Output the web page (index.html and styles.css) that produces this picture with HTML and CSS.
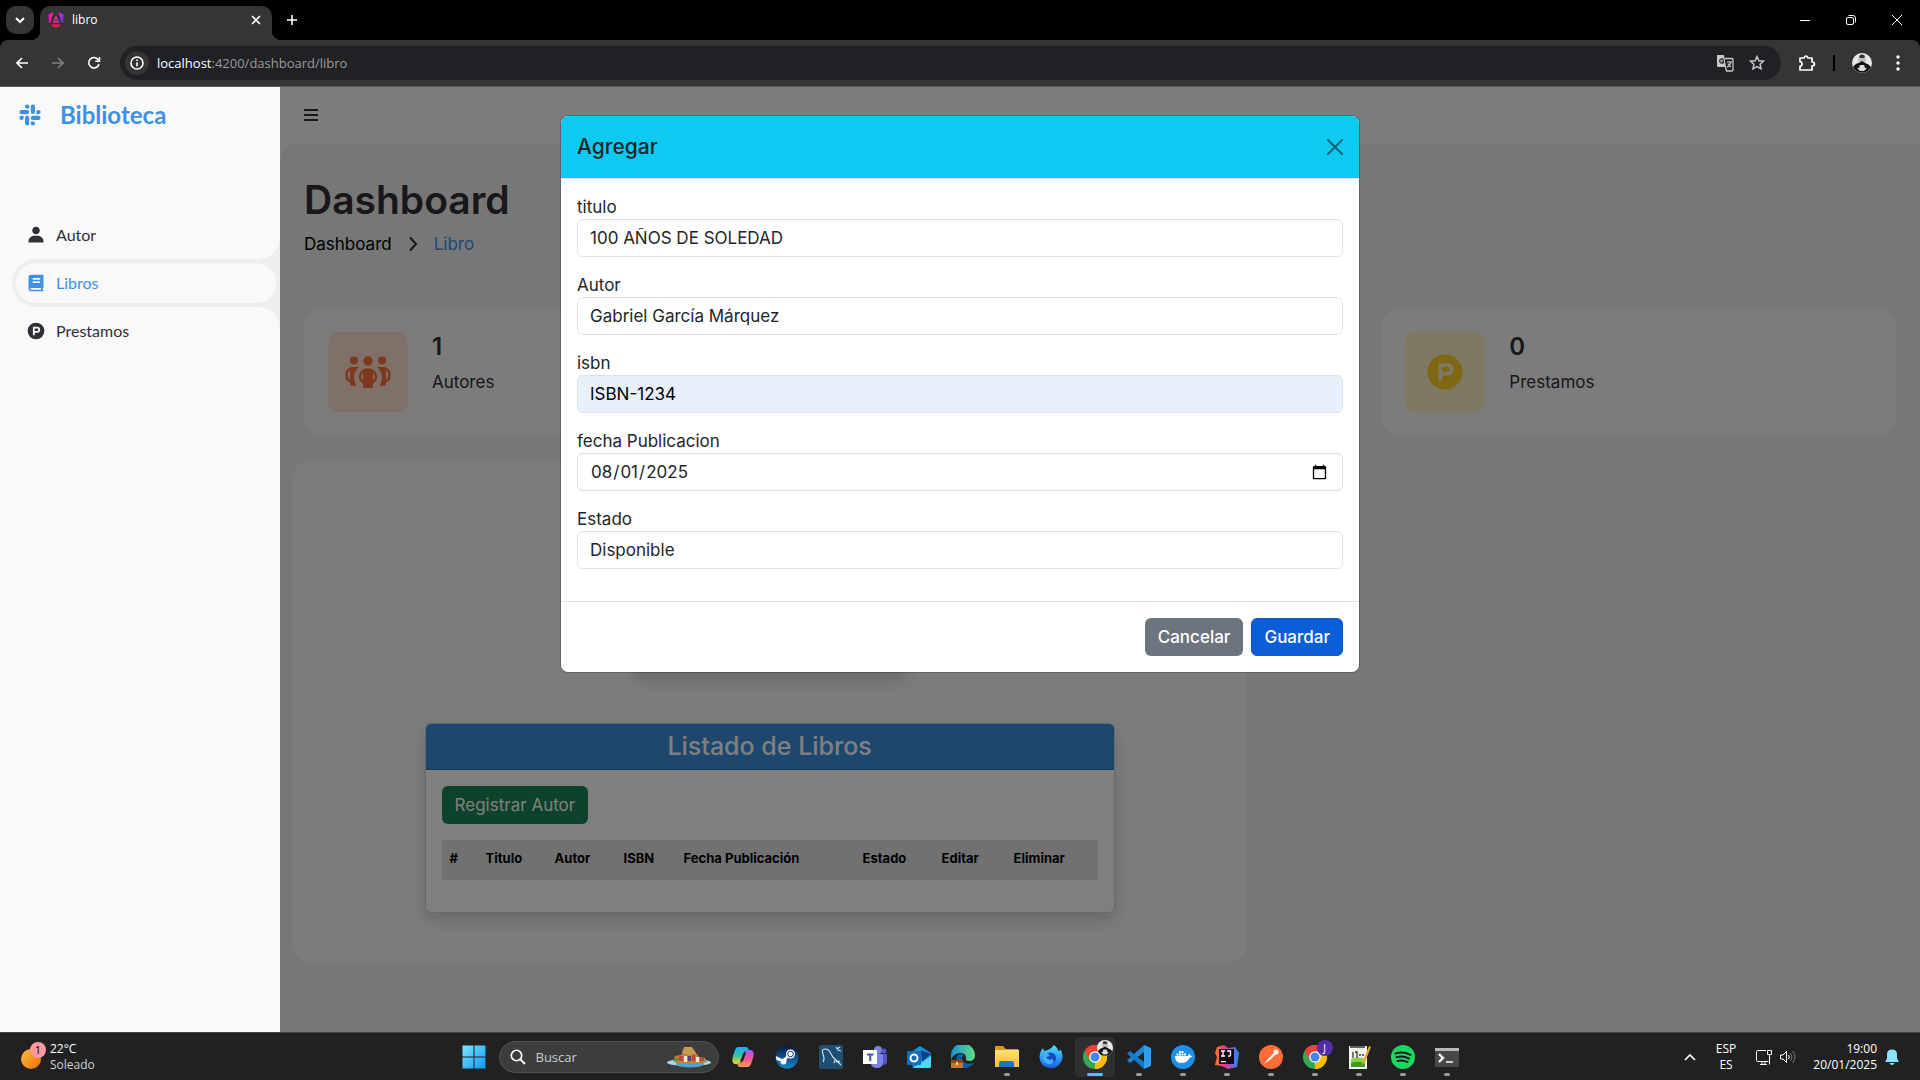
FILE: index.html
```
<!DOCTYPE html>
<html lang="en-US">
<head>
<meta charset="utf-8">
<title>libro</title>
<link rel="stylesheet" href="styles.css">
</head>
<body>
<svg class="defs" aria-hidden="true">
  <defs>
    <symbol id="parking" viewBox="0 0 24 24"><path fill-rule="evenodd" d="M12 2a10 10 0 1 0 0 20 10 10 0 0 0 0-20zM8.300 7h5.200a3.400 3.400 0 0 1 0 7h-3v3H8.300zm2.200 2.100v2.800h2.900a1.400 1.400 0 0 0 0-2.800z"/></symbol>
    <symbol id="chrome" viewBox="0 0 24 24">
      <path d="M12 12 1.600 6A12 12 0 0 1 22.400 6z" fill="#ea4335"/>
      <path d="M12 12 22.400 6A12 12 0 0 1 12 24z" fill="#fbbc04"/>
      <path d="M12 12V24A12 12 0 0 1 1.600 6z" fill="#34a853"/>
      <path d="M12 6.500h10.700A12 12 0 0 0 1.600 6L7 15z" fill="#ea4335"/>
      <path d="M16.800 14.700 11.500 24A12 12 0 0 0 22.700 6.500H12z" fill="#fbbc04"/>
      <circle cx="12" cy="12" r="5.800" fill="#fff"/><circle cx="12" cy="12" r="4.500" fill="#4285f4"/>
    </symbol>
    <symbol id="portrait" viewBox="0 0 20 20">
      <circle cx="10" cy="10" r="10" fill="#e8e8e8"/>
      <path d="M7 3q3-4 6 0l1 5-2 3H8L6 8z" fill="#bbb"/><path d="M7 3q3-3 6 0l-1 2H8z" fill="#333"/>
      <path d="M1 14q3-4 6-4l3-2 3 2q4 1 6 4a10 10 0 0 1-18 0z" fill="#111"/><path d="M8 12h4l1 3H7zM5 15h10l-3 3H8z" fill="#ddd"/>
    </symbol>
    <linearGradient id="gAng" x2="1"><stop stop-color="#f0b"/><stop offset=".5" stop-color="#f03c8c"/><stop offset="1" stop-color="#7a2cff"/></linearGradient>
    <linearGradient id="gWin" x2="1" y2="1"><stop stop-color="#7ee6ff"/><stop offset="1" stop-color="#0a96f8"/></linearGradient>
    <linearGradient id="gCopA" y2="1" x2="0"><stop stop-color="#1fa8ff"/><stop offset=".5" stop-color="#2fc3a0"/><stop offset="1" stop-color="#ffd21f"/></linearGradient>
    <linearGradient id="gCopB" y2="1" x2="0"><stop stop-color="#a45cff"/><stop offset=".5" stop-color="#f0529c"/><stop offset="1" stop-color="#ff9a4a"/></linearGradient>
    <linearGradient id="gSteam" y2="1" x2="0"><stop stop-color="#0b1740"/><stop offset="1" stop-color="#1488c8"/></linearGradient>
    <linearGradient id="gSun" x2="1" y2="1"><stop stop-color="#f8c23a"/><stop offset="1" stop-color="#f0680c"/></linearGradient>
    <linearGradient id="gFox" y2="1" x2="0"><stop stop-color="#4fe0ff"/><stop offset="1" stop-color="#1560e8"/></linearGradient>
    <linearGradient id="gEdge" x2="1" y2="0"><stop stop-color="#1b8fd8"/><stop offset="1" stop-color="#5fe07a"/></linearGradient>
    <linearGradient id="gFold" y2="1" x2="0"><stop stop-color="#ffe07a"/><stop offset="1" stop-color="#f8bf2c"/></linearGradient>
    <linearGradient id="gIdea" x2="1"><stop stop-color="#ff7a1c"/><stop offset=".4" stop-color="#f0358c"/><stop offset="1" stop-color="#1c8cff"/></linearGradient>
  </defs>
</svg>

<header class="browser">
  <div class="tabstrip">
    <button class="tab-search" aria-label="Buscar pestañas"><svg width="12" height="12" viewBox="0 0 12 12"><path d="M2 4l4 4 4-4" class="line"/></svg></button>
    <div class="tab">
      <svg width="16" height="16" viewBox="0 0 16 16" fill="url(#gAng)"><path d="M.3 2.500 5.700 0 2 11 1 10.500zM15.700 2.500 10.300 0 14 11l1-.5z"/><path d="M8 3.200 11.500 11H10L8 6.500 6 11H4.500z"/><path d="M6.500 9h3v2h-3z"/><path d="M4 12.300h8L12.500 14 8 16l-4.500-2z" fill="#f0134c"/></svg>
      <span class="tab-title">libro</span>
      <button class="plain" aria-label="Cerrar pestaña"><svg width="10" height="10" viewBox="0 0 10 10"><path d="M1 1l8 8M9 1 1 9" class="line thin"/></svg></button>
    </div>
    <button class="plain new-tab" aria-label="Nueva pestaña"><svg width="12" height="12" viewBox="0 0 12 12"><path d="M6 1v10M1 6h10" class="line thin"/></svg></button>
    <div class="window-controls">
      <button class="plain" aria-label="Minimizar"><svg width="10" height="10" viewBox="0 0 10 10"><path d="M0 5.500h10" stroke="#fff"/></svg></button>
      <button class="plain" aria-label="Restaurar"><svg width="10" height="10" viewBox="0 0 10 10" fill="none" stroke="#fff"><rect x=".5" y="2.500" width="7" height="7" rx="1.500"/><path d="M2.500.500H7A2.500 2.500 0 0 1 9.500 3v4.500"/></svg></button>
      <button class="plain" aria-label="Cerrar"><svg width="10" height="10" viewBox="0 0 10 10"><path d="M0 0l10 10M10 0 0 10" stroke="#fff"/></svg></button>
    </div>
  </div>
  <div class="toolbar">
    <div class="nav-buttons">
      <button class="plain" aria-label="Atrás"><svg width="12" height="12" viewBox="0 0 12 12"><path d="M12 6H1M6 1 1 6l5 5" class="line thin"/></svg></button>
      <button class="plain dim" aria-label="Adelante"><svg width="12" height="12" viewBox="0 0 12 12"><path d="M0 6h11M6 1l5 5-5 5" class="line thin"/></svg></button>
      <button class="plain" aria-label="Recargar"><svg width="14" height="14" viewBox="0 0 14 14"><path d="M12 8A5.200 5.200 0 1 1 11 3.500L12.500 5M12.500 1v4.300H8.300" class="line thin"/></svg></button>
    </div>
    <div class="address">
      <span class="info"><svg width="14" height="14" viewBox="0 0 14 14"><circle cx="7" cy="7" r="6" class="line thin"/><path d="M7 6.200v4M7 3.500v1.400" class="line thin"/></svg></span>
      <span class="url"><b>localhost</b>:4200/dashboard/libro</span>
      <span class="address-icons">
        <svg width="18" height="18" viewBox="0 0 18 18"><path d="M1 1h7l2 12H2a1 1 0 0 1-1-1z" fill="#c7c7c7"/><path d="M8.500 4.500H16a1 1 0 0 1 1 1V16a1 1 0 0 1-1 1h-5.500L9.500 13" fill="none" stroke="#c7c7c7" stroke-width="1.300"/><path d="M7.500 5.500A2.200 2.200 0 1 0 7.500 8.500V7H5.500" fill="none" stroke="#202124" stroke-width="1.200"/><path d="M11 8h5M13.500 7v1M15 8q-1 4-4 5M12 9.500q1 2.500 3 3.500" fill="none" stroke="#c7c7c7" stroke-width="1.100"/></svg>
        <svg width="16" height="16" viewBox="0 0 16 16"><path d="M8 1.500l1.900 4.200 4.600.5-3.400 3.100.9 4.500-4-2.300-4 2.300.9-4.500L1.500 6.200l4.600-.5z" fill="none" stroke="#c7c7c7" stroke-width="1.500"/></svg>
      </span>
    </div>
    <div class="toolbar-right">
      <svg width="18" height="18" viewBox="0 0 18 18"><path d="M2 4h4.300q.2-2 1.700-2t1.700 2H14v4q2.500.2 2.500 2T14 12v4H2v-3.700q2-.3 2-2.300T2 7.700z" fill="none" stroke="#fff" stroke-width="1.700" stroke-linejoin="round"/></svg>
      <span class="divider"></span>
      <svg width="20" height="20"><use href="#portrait"/></svg>
      <svg width="4" height="16" viewBox="0 0 4 16" fill="#fff"><circle cx="2" cy="2" r="1.700"/><circle cx="2" cy="8" r="1.700"/><circle cx="2" cy="14" r="1.700"/></svg>
    </div>
  </div>
</header>

<div class="app">
  <aside class="sidebar">
    <a class="brand" href="#">
      <svg width="22" height="22" viewBox="0 0 22 22" fill="none" stroke="currentColor" stroke-width="4.200" stroke-linecap="round"><path d="M2.500 8.100h5.600M13.900 2.500v5.600M13.900 13.900h5.600M8.100 13.900v5.600"/><path d="M8.100 2.500h.01M19.500 8.100h.01M13.900 19.500h.01M2.500 13.900h.01"/><path d="M8.100 2.500h1.100v1.100M19.500 8.100h-1v1.100M13.900 19.500h-1v-1M2.500 13.900v-1h1" stroke-width="2" stroke-linecap="square"/></svg>
      <span>Biblioteca</span>
    </a>
    <ul class="menu">
      <li><a href="#"><svg width="20" height="20" viewBox="0 0 24 24" fill="currentColor"><path d="M7.500 6.500C7.500 8.981 9.519 11 12 11s4.500-2.019 4.500-4.500S14.481 2 12 2 7.500 4.019 7.500 6.500zM20 21h1v-1c0-3.859-3.141-7-7-7h-4c-3.860 0-7 3.141-7 7v1z"/></svg>Autor</a></li>
      <li class="active"><a href="#"><svg width="20" height="20" viewBox="0 0 24 24" fill="currentColor"><path fill-rule="evenodd" d="M6 2h15v16h-1v2h1v2H6a3 3 0 0 1-3-3V5a3 3 0 0 1 3-3zm0 16a1 1 0 0 0 0 2h12v-2zM8 6v2h9V6zm0 4v2h9v-2z"/></svg>Libros</a></li>
      <li><a href="#"><svg width="20" height="20" fill="currentColor"><use href="#parking"/></svg>Prestamos</a></li>
    </ul>
  </aside>

  <section class="content">
    <nav class="navbar"><button class="plain" aria-label="Menú"><svg width="14" height="12" viewBox="0 0 14 12"><path d="M0 1h14M0 6h14M0 11h14" stroke="#342e37" stroke-width="2"/></svg></button></nav>
    <main class="main">
      <h1>Dashboard</h1>
      <ul class="breadcrumb">
        <li><a href="#">Dashboard</a></li>
        <li><svg width="18" height="18" viewBox="0 0 18 18"><path d="M6 2.500l6 6.500-6 6.500" fill="none" stroke="#342e37" stroke-width="2"/></svg></li>
        <li><a class="current" href="#">Libro</a></li>
      </ul>
      <ul class="stats">
        <li>
          <span class="stat-icon orange"><svg width="48" height="36" viewBox="0 0 48 36"><g fill="currentColor"><circle cx="10" cy="6.500" r="4"/><circle cx="38" cy="6.500" r="4"/><circle cx="24" cy="7" r="4.700"/><path d="M6 13h9q-8 7-3 18l-1 1H8q-2 0-2-3zM42 13h-9q8 7 3 18l1 1h3q2 0 2-3z"/><path d="M19 15h10v17q0 2-2 2h-6q-2 0-2-2z"/></g><g fill="none" stroke="currentColor" stroke-width="2.600"><path d="M9 14.200q-6 0-6.500 6.500Q2.500 26 7 28M39 14.200q6 0 6.500 6.500Q45.500 26 41 28"/><ellipse cx="24" cy="22.500" rx="8" ry="7"/></g></svg></span>
          <span class="stat-text"><strong>1</strong><span>Autores</span></span>
        </li>
        <li></li>
        <li>
          <span class="stat-icon yellow"><svg width="42" height="42" fill="currentColor"><use href="#parking"/></svg></span>
          <span class="stat-text"><strong>0</strong><span>Prestamos</span></span>
        </li>
      </ul>
      <div class="table-data">
        <div class="card image-card"></div>
        <div class="card list-card">
          <h2>Listado de Libros</h2>
          <div class="card-body">
            <button class="btn success">Registrar Autor</button>
            <table>
              <colgroup><col class="w-num"><col class="w-md"><col class="w-md"><col class="w-sm"><col class="w-date"><col class="w-state"><col class="w-edit"><col></colgroup>
              <thead><tr><th>#</th><th>Titulo</th><th>Autor</th><th>ISBN</th><th>Fecha Publicación</th><th>Estado</th><th>Editar</th><th>Eliminar</th></tr></thead>
            </table>
          </div>
        </div>
      </div>
    </main>
    <div class="backdrop"></div>
  </section>

  <div class="modal" role="dialog" aria-labelledby="modal-title">
    <form class="modal-content">
      <div class="modal-header">
        <h5 id="modal-title">Agregar</h5>
        <button type="button" class="plain close" aria-label="Cerrar"><svg width="16" height="16" viewBox="0 0 16 16"><path d="M1 1l14 14M15 1 1 15" stroke="#000" stroke-width="2" stroke-linecap="round"/></svg></button>
      </div>
      <div class="modal-body">
        <div class="field"><label for="titulo">titulo</label><input id="titulo" type="text" value="100 AÑOS DE SOLEDAD"></div>
        <div class="field"><label for="autor">Autor</label><input id="autor" type="text" value="Gabriel García Márquez"></div>
        <div class="field"><label for="isbn">isbn</label><input id="isbn" class="filled" type="text" value="ISBN-1234"></div>
        <div class="field"><label for="fecha">fecha Publicacion</label><input id="fecha" type="date" value="2025-08-01"></div>
        <div class="field"><label for="estado">Estado</label><input id="estado" type="text" value="Disponible"></div>
      </div>
      <div class="modal-footer">
        <button type="button" class="btn secondary">Cancelar</button>
        <button type="button" class="btn primary">Guardar</button>
      </div>
    </form>
  </div>
</div>

<footer class="taskbar">
  <div class="weather">
    <svg width="28" height="30" viewBox="0 0 28 30"><circle cx="11" cy="17" r="10" fill="url(#gSun)"/><circle cx="18" cy="8" r="8" fill="#ff99a4"/><text x="18" y="12" text-anchor="middle" class="badge-num">1</text></svg>
    <span class="weather-text"><span>22°C</span><span class="soft">Soleado</span></span>
  </div>
  <div class="dock">
    <button class="app-icon" aria-label="Inicio"><svg width="24" height="24" viewBox="0 0 24 24" fill="url(#gWin)"><path d="M.5.500h11v11H.5zM12.500.500h11v11h-11zM.5 12.500h11v11H.5zM12.500 12.500h11v11h-11z"/></svg></button>
    <label class="search">
      <svg width="16" height="16" viewBox="0 0 16 16"><circle cx="6.500" cy="6.500" r="5.200" class="line thin"/><path d="M10.500 10.500 15 15" class="line"/></svg>
      <input type="text" placeholder="Buscar" aria-label="Buscar">
      <svg width="46" height="22" viewBox="0 0 46 22"><ellipse cx="23" cy="16.500" rx="22" ry="3.500" fill="#9fdcf5"/><ellipse cx="24" cy="18" rx="14" ry="3.500" fill="#4aa3d4"/><path d="M7 15 9 10l6-1 4-6h8l3 4 3 4 6 1 2 4-8 2H12z" fill="#b8863f"/><path d="M18 1h8l4 6-6 2-8-2z" fill="#c79a52"/><path d="M13 10h4v5h-4zM26 9h3v6h-3zM34 12h4v3h-4z" fill="#c9413a"/><path d="M18 10h3v6h-3zM30 11h3v5h-3z" fill="#f2ead2"/><path d="M22 10h3v5h-3z" fill="#5b3a8c"/><path d="M8 12h4v3H8z" fill="#5d8c3a"/></svg>
    </label>
    <button class="app-icon" aria-label="Copilot"><svg width="24" height="24" viewBox="0 0 24 24"><path d="M7 2h8q2 0 2.500 2l.5 2h-3q-2 0-3 3l-2 7q-1 3-3 3H4q-4-1-2-8l2-6q1-3 3-3z" fill="url(#gCopA)"/><path d="M17 22H9q-2 0-2.500-2L6 18h3q2 0 3-3l2-7q1-3 3-3h3q4 1 2 8l-2 6q-1 3-3 3z" fill="url(#gCopB)"/><path d="M13 8h2l-3 8h-3z" fill="#222"/></svg></button>
    <button class="app-icon" aria-label="Steam"><svg width="24" height="24" viewBox="0 0 24 24"><circle cx="12" cy="12" r="11.500" fill="url(#gSteam)"/><path d="M.8 11 8 14.500l4.500-5v4L9.500 17.500 1.500 15z" fill="#fff"/><circle cx="15.500" cy="9" r="4.500" fill="#fff"/><circle cx="15.500" cy="9" r="2.800" fill="none" stroke="#0c3a68"/><circle cx="8.500" cy="16.500" r="3" fill="#fff"/></svg></button>
    <button class="app-icon" aria-label="MySQL Workbench"><svg width="24" height="24" viewBox="0 0 24 24"><rect width="24" height="24" rx="2" fill="#1f4e74"/><path d="M4 17q2-3 0-8-2-5 2-5 4 0 6 5 2 4 5 6l5 5M16 15l-1 3M17 17l4-1M17 2l2 3 3 1M18 4l3-2" fill="none" stroke="#d5e6f2" stroke-width="1.100"/></svg></button>
    <button class="app-icon" aria-label="Teams"><svg width="24" height="24" viewBox="0 0 24 24"><circle cx="15" cy="5" r="4" fill="#7b83eb"/><circle cx="21" cy="6" r="2.500" fill="#5059c9"/><path d="M17 9h7v7q0 4-4 4z" fill="#5059c9"/><path d="M9 9h11v8q0 6-6 6t-6-5z" fill="#7b83eb"/><rect y="5" width="14" height="14" fill="#fff"/><path d="M4 8.500h6.500v2H8.300V16H6.200v-5.500H4z" fill="#4b53bc"/></svg></button>
    <button class="app-icon" aria-label="Outlook"><svg width="24" height="24" viewBox="0 0 24 24"><path d="M3 8 13 1l11 7v13a2 2 0 0 1-2 2H6z" fill="#1490df"/><path d="M14 5l10 4-9 8z" fill="#0a3f8c"/><path d="M6 23 24 11v10a2 2 0 0 1-2 2z" fill="#4fd8f5"/><rect y="6" width="14" height="14" rx="1" fill="#0f6cbd"/><circle cx="7" cy="13" r="3.500" fill="none" stroke="#fff" stroke-width="2"/></svg></button>
    <button class="app-icon" aria-label="Edge"><svg width="24" height="24" viewBox="0 0 24 24"><path d="M0 11A12 12 0 0 1 24 10q0 6-6 6-4 0-3-3 0-5-6-5T0 15z" fill="url(#gEdge)"/><path d="M8 9q-4 3-2 8 3 7 10 6 4-1 7-5-8 2-11-2t1-5q-2-3-5-2z" fill="#0f5ca8"/><path d="M0 15h12v8H0z" fill="#c8742c"/><path d="M0 15h12v3H0z" fill="#8c4a1c"/><path d="M5 17h2v3H5z" fill="#ffd36a"/></svg></button>
    <button class="app-icon running" aria-label="Explorador de archivos"><svg width="24" height="24" viewBox="0 0 24 24"><path d="M0 1h8l3 3h12v5H0z" fill="#d99a12"/><path d="M0 5h24v17H0z" fill="url(#gFold)"/><path d="M4 22v-4q0-2 2-2h11q2 0 2 2v4z" fill="#1976c9"/></svg></button>
    <button class="app-icon" aria-label="Firefox"><svg width="24" height="24" viewBox="0 0 24 24"><path d="M15 0q4 3 4 6l3-1q3 8 0 12-4 7-11 6Q1 22 .5 12 1 6 4 3l1 3 4-1q3-1 6-5z" fill="url(#gFox)"/><circle cx="11.500" cy="13" r="5.500" fill="#1847b8"/><path d="M4 9q5-2 7 2l-4 1q2 4 7 2 2 6-5 5-6-2-5-10z" fill="#3fb2ff"/></svg></button>
    <button class="app-icon running selected" aria-label="Chrome"><svg width="24" height="24"><use href="#chrome"/></svg><svg class="profile" width="16" height="16"><use href="#portrait"/></svg></button>
    <button class="app-icon running" aria-label="Visual Studio Code"><svg width="24" height="24" viewBox="0 0 24 24"><path d="M17 0l7 3v18l-7 3z" fill="#2ba0ee"/><path d="M17 0v7L3 18l-3-2.500z" fill="#1f86cf"/><path d="M0 8.500 3 6l14 11v7z" fill="#1279c4"/></svg></button>
    <button class="app-icon running" aria-label="Docker"><svg width="24" height="24" viewBox="0 0 24 24"><circle cx="12" cy="12" r="12" fill="#1d90ed"/><path d="M4 11h13q.3-1.500 1.500-2.200.8.800.8 2 1.200-.3 2 .2-.6 1.500-2.600 1.500Q16.500 18 10 18q-6 0-6-7zM5.500 8.500h2v2h-2zM8 8.500h2v2H8zM10.500 8.500h2v2h-2zM13 8.500h2v2h-2zM8 6h2v2H8zM10.500 6h2v2h-2z" fill="#fff"/></svg></button>
    <button class="app-icon running" aria-label="IntelliJ IDEA"><svg width="24" height="24" viewBox="0 0 24 24"><path d="M2 2 9 0l4 3 7-1 4 6-2 14-9 2-6-3-7-1 2-8-2-4z" fill="url(#gIdea)"/><path d="M4 4h15v15H4z" fill="#100a18"/><path d="M6 6h4M8 6v5M6 11h4M12 6h3.500v4q0 1.500-2.500 1" fill="none" stroke="#fff" stroke-width="1.300"/><path d="M6 16h5v1.300H6z" fill="#fff"/></svg></button>
    <button class="app-icon running" aria-label="Postman"><svg width="24" height="24" viewBox="0 0 24 24"><circle cx="12" cy="12" r="12" fill="#ff6c37"/><circle cx="17" cy="7" r="2.500" fill="#fff"/><path d="M15 8l-5 5-5 6 7-5 5-5z" fill="#fff"/></svg></button>
    <button class="app-icon running" aria-label="Chrome J"><svg width="24" height="24"><use href="#chrome"/></svg><span class="profile letter">J</span></button>
    <button class="app-icon running" aria-label="Notepad++"><svg width="24" height="24" viewBox="0 0 24 24"><path d="M2 1h18v23H2z" fill="#f4f4ea"/><path d="M4 14q8-3 14 0v8H4z" fill="#8bd23f"/><path d="M4 18q8-3 14 1v3H4z" fill="#3f9a28"/><path d="M6 7v6M8 7h2v6M12 10h2M15 10h2M3 2h15" stroke="#333" fill="none" stroke-width="1.300"/><path d="M22 1l2 1-6 15-3 3 1-4z" fill="#e8a32c"/></svg></button>
    <button class="app-icon running" aria-label="Spotify"><svg width="24" height="24" viewBox="0 0 24 24"><circle cx="12" cy="12" r="12" fill="#1ed760"/><path d="M4.500 8.500Q12 6 19.500 9.800M5.500 12.300q6.500-2 12.500 1.300M6.500 16q5-1.500 10 1" fill="none" stroke="#1a1a1a" stroke-width="2" stroke-linecap="round"/></svg></button>
    <button class="app-icon running" aria-label="Terminal"><svg width="24" height="24" viewBox="0 0 24 24"><rect y="3" width="24" height="19" rx="1" fill="#484848"/><path d="M0 3h24v3H0z" fill="#b8b8b8"/><path d="M4 9l4 4-4 4" fill="none" stroke="#fff" stroke-width="2.400"/><path d="M11 16h7v2h-7z" fill="#ccc"/></svg></button>
  </div>
  <div class="tray">
    <svg width="12" height="8" viewBox="0 0 12 8"><path d="M1 7l5-5 5 5" class="line thin"/></svg>
    <span class="lang"><span>ESP</span><span>ES</span></span>
    <svg width="16" height="18" viewBox="0 0 16 18" fill="none" stroke="#fff"><path d="M10 2.500H1.500a1 1 0 0 0-1 1v9a1 1 0 0 0 1 1h11M4 16.500h7M6 13.500v3M9 13.500v3M11.500 2.500h4v4h-4zM13.500 6.500v10"/></svg>
    <svg width="16" height="14" viewBox="0 0 16 14" fill="none" stroke="#fff"><path d="M.5 5v4H3l3.500 3.500v-11L3 5zM8.500 5q1.500 2 0 4"/><path d="M10.500 3q3 4 0 8M12.500 1q5 6 0 12" stroke="#777"/></svg>
    <span class="clock"><span>19:00</span><span>20/01/2025</span></span>
    <svg width="14" height="16" viewBox="0 0 14 16" fill="#8be4ff"><path d="M7 .5q5 0 5 5v4l1.500 2.500v1H.5v-1L2 9.500v-4q0-5 5-5zM4.500 14h5q-.8 2-2.500 2t-2.500-2z"/></svg>
  </div>
</footer>
</body>
</html>
```
FILE: styles.css
```
* { box-sizing: border-box; }
body {
  margin: 0;
  min-height: 100vh;
  display: flex;
  flex-direction: column;
  font: 17px/24px Inter, sans-serif;
  color: #212529;
}
svg { display: block; flex: none; }
.defs { position: absolute; width: 0; height: 0; }
button, input { font: inherit; color: inherit; }
a { color: inherit; text-decoration: none; }
ul { list-style: none; margin: 0; padding: 0; }
.plain {
  border: 0;
  background: none;
  padding: 0;
  display: flex;
  align-items: center;
  justify-content: center;
}
.line { fill: none; stroke: currentColor; stroke-width: 2; }
.line.thin { stroke-width: 1.6; }

/* Browser chrome */
.browser { background: #000; color: #fff; font: 12px/16px "Open Sans", sans-serif; }
.tabstrip { display: flex; align-items: center; height: 40px; padding-left: 6px; }
.tab-search {
  display: flex;
  align-items: center;
  justify-content: center;
  width: 28px;
  height: 28px;
  margin-right: 6px;
  padding: 0;
  border: 0;
  border-radius: 10px;
  background: #353535;
}
.tab {
  position: relative;
  display: flex;
  align-items: center;
  gap: 8px;
  width: 232px;
  height: 34px;
  align-self: flex-end;
  padding: 0 11px 6px 8px;
  border-radius: 10px 10px 0 0;
  background: #353535;
}
.tab::before, .tab::after {
  content: "";
  position: absolute;
  bottom: 0;
  width: 10px;
  height: 10px;
}
.tab::before { right: 100%; background: radial-gradient(circle at 0 0, #000 10px, #353535 11px); }
.tab::after { left: 100%; background: radial-gradient(circle at 100% 0, #000 10px, #353535 11px); }
.tab-title { flex: 1; }
.new-tab { width: 40px; height: 40px; }
.window-controls { display: flex; margin-left: auto; }
.window-controls .plain { width: 46px; height: 40px; }
.toolbar {
  display: flex;
  align-items: center;
  height: 47px;
  background: #353535;
  border-radius: 8px 8px 0 0;
  border-bottom: 1px solid #5a5a5a;
}
.nav-buttons { display: flex; padding-left: 4px; width: 120px; }
.nav-buttons .plain { width: 36px; height: 36px; }
.nav-buttons .dim { color: #808080; }
.address {
  flex: 1;
  display: flex;
  align-items: center;
  gap: 8px;
  height: 34px;
  padding: 0 16px 0 5px;
  border-radius: 17px;
  background: #202124;
  color: #9a9a9a;
  font-size: 13px;
}
.address b { color: #fff; font-weight: 400; }
.info {
  display: flex;
  align-items: center;
  justify-content: center;
  width: 24px;
  height: 24px;
  border-radius: 50%;
  background: #353535;
  color: #fff;
}
.address-icons { display: flex; align-items: center; gap: 15px; margin-left: auto; }
.toolbar-right { display: flex; align-items: center; gap: 17px; padding: 0 20px 0 17px; }
.toolbar-right > :last-child { margin-left: 7px; }
.divider { width: 2px; height: 16px; background: #000; }

/* Application shell */
.app { position: relative; flex: 1; display: flex; background: #eee; }
.sidebar {
  position: relative;
  z-index: 3;
  flex: none;
  width: 280px;
  overflow: hidden;
  background: #f9f9f9;
  color: #342e37;
  font: 16px/24px Lato, sans-serif;
}
.brand {
  display: flex;
  align-items: center;
  gap: 19px;
  height: 56px;
  padding-left: 19px;
  color: #3c91e6;
  font-size: 24px;
  font-weight: 700;
}
.menu { margin-top: 68px; }
.menu li { height: 48px; margin-left: 12px; padding: 4px; border-radius: 48px 0 0 48px; }
.menu a {
  display: flex;
  align-items: center;
  gap: 10px;
  height: 40px;
  padding-left: 10px;
  border-radius: 48px;
  background: #f9f9f9;
}
.menu .active { position: relative; background: #eee; }
.menu .active a { color: #3c91e6; }
.menu .active::before, .menu .active::after {
  content: "";
  position: absolute;
  right: 0;
  width: 20px;
  height: 20px;
}
.menu .active::before { bottom: 100%; background: radial-gradient(circle at 0 0, #f9f9f9 19px, #eee 20px); }
.menu .active::after { top: 100%; background: radial-gradient(circle at 0 100%, #f9f9f9 19px, #eee 20px); }
.content { position: relative; flex: 1; min-width: 0; background: #f9f9f9; color: #342e37; }
.backdrop { position: absolute; inset: 0; background: rgba(0, 0, 0, .5); }
.navbar { display: flex; align-items: center; height: 56px; padding: 0 24px; }
.main {
  height: calc(100% - 56px);
  padding: 36px 24px;
  border-radius: 20px 0 0 0;
  background: #eee;
}
h1 { margin: 0; font-size: 39px; line-height: 42px; font-weight: 600; }
.breadcrumb { display: flex; align-items: center; gap: 12px; margin-top: 11px; line-height: 24px; }
.breadcrumb a { color: #000; }
.breadcrumb .current { color: #3c91e6; }
.stats { display: grid; grid-template-columns: repeat(3, 1fr); gap: 24px; margin-top: 52px; }
.stats li {
  display: flex;
  align-items: center;
  gap: 24px;
  height: 128px;
  padding: 24px;
  border-radius: 20px;
  background: #f9f9f9;
}
.stat-icon {
  display: flex;
  align-items: center;
  justify-content: center;
  width: 80px;
  height: 80px;
  border-radius: 10px;
}
.orange { background: #ffe0d3; color: #fd7238; }
.yellow { background: #fff2c6; color: #ffce26; }
.stat-text { display: flex; flex-direction: column; gap: 2px; padding-bottom: 18px; line-height: 30px; }
.stat-text strong { font-size: 24px; line-height: 36px; font-weight: 600; }
.table-data {
  display: flex;
  flex-direction: column;
  align-items: center;
  gap: 50px;
  width: 60%;
  margin: 24px 0 0 -12px;
  padding: 24px 24px 50px;
  border-radius: 20px;
  background: #f9f9f9;
}
.card {
  border: 1px solid rgba(0, 0, 0, .18);
  border-radius: 6px;
  background: #fff;
  box-shadow: 0 8px 16px rgba(0, 0, 0, .15);
}
.image-card { width: 274px; height: 189px; }
.list-card { width: 690px; max-width: 100%; }
h2 {
  margin: 0;
  height: 46px;
  border-bottom: 1px solid #3473b4;
  border-radius: 5px 5px 0 0;
  background: #3c8ee0;
  color: #fff;
  font-size: 25px;
  line-height: 44px;
  font-weight: 500;
  text-align: center;
}
.card-body { padding: 16px 16px 32px; }
.btn {
  height: 38px;
  padding: 0 12px;
  border: 1px solid transparent;
  border-radius: 6px;
  color: #fff;
  white-space: nowrap;
}
.success { background: #198754; }
.secondary { background: #6c757d; font-weight: 500; }
.primary { background: #0b5ed7; border-color: #0a58ca; font-weight: 500; }
table { width: 100%; margin-top: 16px; border-collapse: collapse; table-layout: fixed; }
thead { background: #e3e3e3; }
th {
  height: 40px;
  padding: 0 0 4px 8px;
  color: #000;
  font-size: 13px;
  line-height: 20px;
  font-weight: 700;
  text-align: left;
  white-space: nowrap;
}
.w-num { width: 36px; }
.w-md { width: 69px; }
.w-sm { width: 60px; }
.w-date { width: 179px; }
.w-state { width: 79px; }
.w-edit { width: 72px; }

/* Dialog */
.modal {
  position: absolute;
  inset: 0;
  z-index: 4;
  display: flex;
  justify-content: center;
  align-items: flex-start;
  padding-top: 28px;
}
.modal-content {
  width: 800px;
  border: 1px solid rgba(0, 0, 0, .18);
  border-radius: 8px;
  background: #fff;
  background-clip: padding-box;
}
.modal-header {
  display: flex;
  align-items: center;
  justify-content: space-between;
  height: 63px;
  padding: 0 16px;
  border-bottom: 1px solid #dee2e6;
  border-radius: 7px 7px 0 0;
  background: #0dcaf0;
}
h5 { margin: 0; font-size: 21px; line-height: 30px; font-weight: 500; }
.close { opacity: .5; }
.modal-body { padding: 16px; }
.field { margin-bottom: 16px; }
.field label { display: block; line-height: 24px; }
.field input {
  display: block;
  width: 100%;
  height: 38px;
  padding: 0 12px;
  border: 1px solid #dee2e6;
  border-radius: 6px;
  background: #fff;
}
.field input.filled { background: #e8f0fe; color: #000; }
.modal-footer {
  display: flex;
  justify-content: flex-end;
  gap: 8px;
  padding: 16px;
  border-top: 1px solid #dee2e6;
}

/* Taskbar */
.taskbar {
  display: grid;
  grid-template-columns: 1fr auto 1fr;
  align-items: center;
  height: 48px;
  border-top: 1px solid #444;
  background: #212121;
  color: #fff;
  font: 12px/16px "Open Sans", sans-serif;
}
.weather { display: flex; align-items: center; gap: 2px; padding-left: 20px; }
.weather-text, .lang, .clock { display: flex; flex-direction: column; }
.soft { color: #d0d0d0; }
.badge-num { font-size: 11px; fill: #000; }
.dock { display: flex; align-items: center; }
.app-icon {
  position: relative;
  display: flex;
  align-items: center;
  justify-content: center;
  width: 40px;
  height: 40px;
  margin: 0 2px;
  padding: 0;
  border: 0;
  border-radius: 4px;
  background: none;
}
.selected { background: #2f2f2f; }
.running::after {
  content: "";
  position: absolute;
  bottom: 1px;
  width: 6px;
  height: 3px;
  border-radius: 2px;
  background: #9a9a9a;
}
.selected::after { width: 16px; background: #4cc2ff; }
.profile { position: absolute; top: 3px; right: 2px; width: 16px; height: 16px; }
.letter { border-radius: 50%; background: #512da8; color: #fff; font-size: 10px; line-height: 16px; }
.search {
  display: flex;
  align-items: center;
  gap: 10px;
  width: 220px;
  height: 32px;
  margin: 0 2px 0 3px;
  padding: 0 6px 0 10px;
  border: 1px solid #525252;
  border-radius: 16px;
  background: #3d3d3d;
}
.search input { flex: 1; min-width: 0; padding: 0; border: 0; outline: 0; background: none; font-size: 13px; }
.search input::placeholder { color: #ccc; opacity: 1; }
.tray { display: flex; align-items: center; justify-content: flex-end; gap: 8px; padding-right: 21px; }
.lang { align-items: center; margin: 0 12px; }
.clock { align-items: flex-end; margin-left: 9px; }
```
